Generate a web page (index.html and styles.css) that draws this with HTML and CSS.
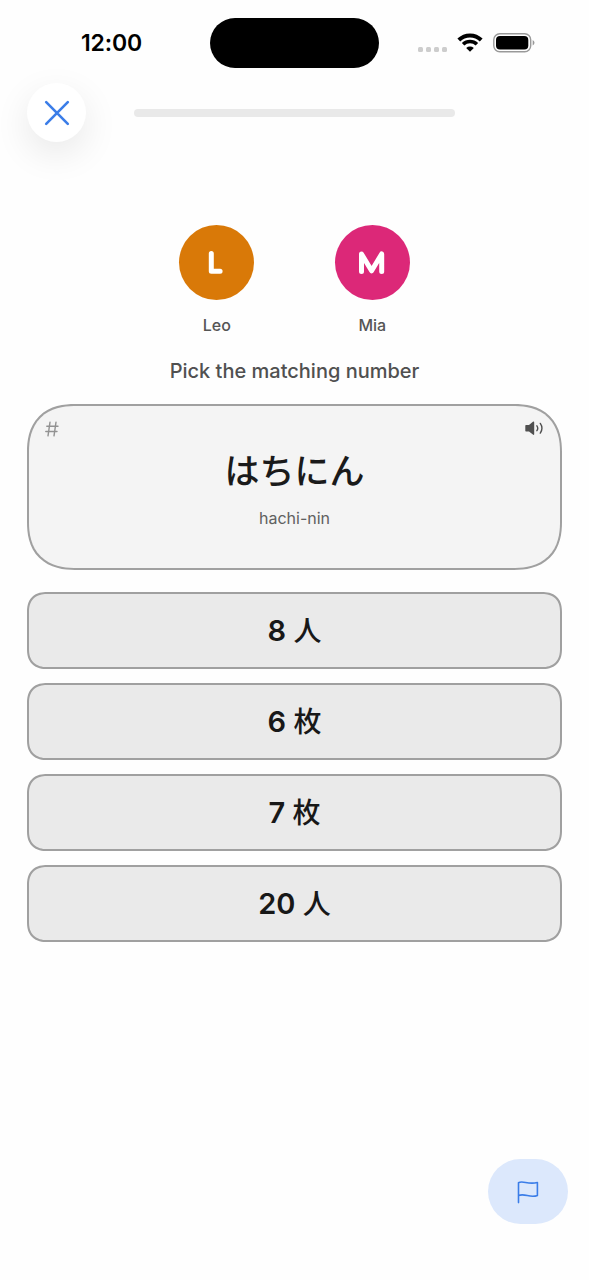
FILE: index.html
```html
<!DOCTYPE html>
<html lang="en">
<head>
<meta charset="utf-8">
<title>Pick the matching number</title>
<link rel="stylesheet" href="styles.css">
</head>
<body>
<div class="screen">
  <header class="status">
    <div class="status-left"><span class="time">12:00</span></div>
    <div class="island"></div>
    <div class="status-right">
      <div class="signal"><i></i><i></i><i></i><i></i></div>
      <svg class="wifi" width="26" height="19" viewBox="0 0 26 19">
        <path d="M1.8 7 A16 16 0 0 1 24.2 7" fill="none" stroke="#000" stroke-width="4"/>
        <path d="M6.1 11.3 A10 10 0 0 1 19.9 11.3" fill="none" stroke="#000" stroke-width="3.6"/>
        <path d="M13 18.8 L9.2 15 A5.6 5.6 0 0 1 16.8 15 Z"/>
      </svg>
      <svg class="battery" width="42" height="20" viewBox="0 0 42 20">
        <rect x=".8" y=".8" width="36.9" height="18" rx="6" fill="none" stroke="#999" stroke-width="1.4"/>
        <rect x="3" y="3" width="32.3" height="13.6" rx="4"/>
        <path d="M39.7 7 Q41.5 8 41.5 9.8 Q41.5 11.6 39.7 12.6 Z" fill="#999"/>
      </svg>
    </div>
  </header>
  <nav class="topbar">
    <button class="close" aria-label="Close">
      <svg width="26" height="26" viewBox="0 0 26 26"><path d="M2.2 2.2 23.8 23.8M23.8 2.2 2.2 23.8" fill="none" stroke="#3b7de8" stroke-width="2.6" stroke-linecap="round"/></svg>
    </button>
    <div class="progress"></div>
  </nav>
  <main>
    <section class="players">
      <div class="player"><div class="avatar orange"><svg width="30" height="30" viewBox="0 0 30 30"><path d="M9.3 5.6V23.3H18.1"/></svg></div><span>Leo</span></div>
      <div class="player"><div class="avatar pink"><svg width="30" height="30" viewBox="0 0 30 30"><path d="M4.5 23.6V6L14.6 22.8 24.7 6V23.6"/></svg></div><span>Mia</span></div>
    </section>
    <h1 class="prompt">Pick the matching number</h1>
    <section class="card">
      <div class="card-head">
        <svg class="hash" width="14" height="16" viewBox="0 0 14 16"><path d="M5 1.2 3 14.8M11 1.2 9 14.8M1.8 5.2H13M.8 10.5H12" fill="none" stroke="#929292" stroke-width="1.4" stroke-linecap="round"/></svg>
        <svg class="sound" width="19" height="15" viewBox="0 0 19 15"><path d="M1 4H4L7.9.7Q9.2 0 9.2 1.4V13Q9.2 14.4 7.9 13.6L4 10.5H1Q.3 10.5.3 9.8V4.7Q.3 4 1 4Z" fill="#505050"/><path d="M11.9 4.8Q13.6 7.2 11.9 9.7M15.3 2.4Q18.6 7.2 15.3 12.1" fill="none" stroke="#505050" stroke-width="1.4" stroke-linecap="round"/></svg>
      </div>
      <div class="word" lang="ja">はちにん</div>
      <div class="reading">hachi-nin</div>
    </section>
    <section class="options">
      <button class="option">8 <span lang="ja">人</span></button>
      <button class="option">6 <span lang="ja">枚</span></button>
      <button class="option">7 <span lang="ja">枚</span></button>
      <button class="option">20 <span lang="ja">人</span></button>
    </section>
  </main>
  <footer>
    <button class="flag" aria-label="Report">
      <svg width="22" height="24" viewBox="0 0 22 24"><path d="M1.5 22.6V2.7C6 .2 11 5 20.4 2.5V15.4C13 18.5 8 12.8 1.5 15.5" fill="none" stroke="#3b7de8" stroke-width="1.6" stroke-linecap="round" stroke-linejoin="round"/></svg>
    </button>
  </footer>
</div>
</body>
</html>
```
FILE: styles.css
```css
* { box-sizing: border-box; }
body { margin: 0; background: #fefefe; font-family: Inter, "Noto Sans CJK JP", sans-serif; }
button { border: 0; padding: 0; font: inherit; color: inherit; }
svg { display: block; }
.screen { width: 589px; height: 1280px; display: flex; flex-direction: column; overflow: hidden; }
.status { height: 68px; padding-top: 18px; display: grid; grid-template-columns: 210px 169px 210px; }
.status-left { display: flex; justify-content: center; padding: 11px 0 0 13px; }
.time { font-size: 23px; line-height: 28px; font-weight: 600; letter-spacing: -.1px; }
.island { height: 50px; border-radius: 25px; background: #000; }
.status-right { display: flex; align-items: flex-start; padding: 15px 0 0 39px; }
.signal { display: flex; gap: 3px; padding-top: 13.5px; width: 39px; }
.signal i { width: 5px; height: 5.5px; border-radius: 1.5px; background: #cdcdcd; }
.battery { margin-left: 10px; }
.topbar { height: 90px; padding: 15px 27px 0; display: flex; align-items: flex-start; }
.close { width: 59px; height: 59px; border-radius: 50%; background: #fff; display: flex; align-items: center; justify-content: center; box-shadow: 0 12px 36px rgba(0,0,0,.09); }
.progress { width: 321px; height: 8px; margin: 26px 0 0 48px; border-radius: 4px; background: #e9e9e9; }
.players { display: flex; justify-content: center; gap: 80px; padding-top: 67px; }
.player { width: 75.5px; display: flex; flex-direction: column; align-items: center; font-size: 16px; line-height: 20px; font-weight: 500; color: #555; gap: 15px; }
.avatar { width: 75px; height: 75px; border-radius: 50%; display: flex; align-items: center; justify-content: center; }
.avatar path { fill: none; stroke: #fff; stroke-width: 5; stroke-linecap: round; stroke-linejoin: round; }
.orange { background: #d97908; }
.pink { background: #dc2878; }
.prompt { margin: 23px 0 0; text-align: center; font-size: 20px; line-height: 26px; font-weight: 500; color: #505050; }
.card { height: 166px; margin: 20px 27px 0; border: 2px solid #a0a0a0; border-radius: 48px; corner-shape: superellipse(1.25); background: #f4f4f4; text-align: center; }
.card-head { height: 32px; padding: 15px 16px 0; display: flex; justify-content: space-between; }
.word { font-family: "Noto Sans CJK JP", sans-serif; font-size: 35px; line-height: 50px; margin-top: 6px; font-weight: 500; color: #1a1a1a; }
.reading { font-size: 16px; line-height: 20px; margin-top: 14px; color: #606060; }
.options { display: flex; flex-direction: column; gap: 14px; padding: 22px 27px 0; }
.option { height: 77px; border: 2px solid #a0a0a0; border-radius: 20px; corner-shape: superellipse(1.25); background: #eaeaea; font-size: 29px; line-height: 36px; font-weight: 600; color: #181818; }
.option span { font-family: "Noto Sans CJK JP", sans-serif; font-size: 28px; line-height: 1; font-weight: 500; }
footer { margin-top: auto; padding: 0 21px 56px 0; display: flex; justify-content: flex-end; }
.flag { width: 80px; height: 65px; border-radius: 33px; background: #dce8fc; display: flex; align-items: center; justify-content: center; }
```
